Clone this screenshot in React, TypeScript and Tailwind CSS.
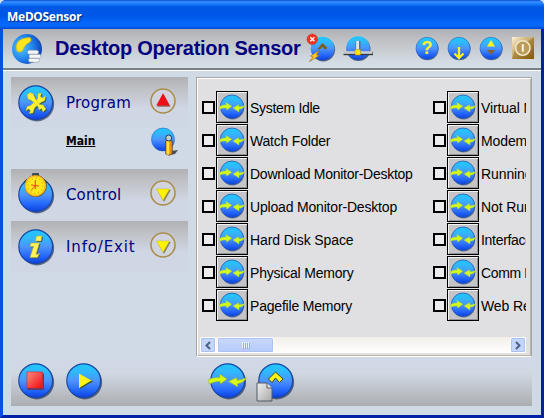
import React from "react";

function Defs() {
  return (
    <svg width="0" height="0" className="absolute" aria-hidden="true">
      <defs>
        <linearGradient id="ball" x1="0" y1="0" x2="0" y2="1">
          <stop offset="0" stopColor="#20c8ff" />
          <stop offset="0.25" stopColor="#30b8fc" />
          <stop offset="0.5" stopColor="#4c94fa" />
          <stop offset="0.8" stopColor="#2264fa" />
          <stop offset="1" stopColor="#0c40d8" />
        </linearGradient>
        <radialGradient id="globe" cx="0.3" cy="0.45" r="0.75">
          <stop offset="0" stopColor="#58c8ff" />
          <stop offset="0.5" stopColor="#2488ee" />
          <stop offset="1" stopColor="#0838b0" />
        </radialGradient>
        <linearGradient id="brown" x1="0" y1="0" x2="1" y2="1">
          <stop offset="0" stopColor="#fff4d8" />
          <stop offset="0.35" stopColor="#b89858" />
          <stop offset="1" stopColor="#805800" />
        </linearGradient>
        <linearGradient id="red" x1="0" y1="0" x2="1" y2="1">
          <stop offset="0" stopColor="#ff8c84" />
          <stop offset="1" stopColor="#ee0808" />
        </linearGradient>
        <linearGradient id="paper" x1="0" y1="0" x2="1" y2="1">
          <stop offset="0" stopColor="#f0f0f0" />
          <stop offset="1" stopColor="#a8a8a8" />
        </linearGradient>
      </defs>
    </svg>
  );
}

/* 38 x 38 glossy round button with a drop shadow */
function Ball({ children }: { children?: React.ReactNode }) {
  return (
    <svg width="38" height="38" viewBox="0 0 38 38" className="block shrink-0 overflow-visible">
      <circle cx="18.9" cy="19.2" r="17.2" fill="#283858" opacity="0.7" />
      <circle cx="17.7" cy="17.7" r="16.9" fill="url(#ball)" stroke="#1a45a5" strokeWidth="1.2" />
      {children}
    </svg>
  );
}

function Arrows() {
  return (
    <g fill="#d8f818" stroke="#88b020" strokeWidth="0.5">
      <path d="M-2 17 Q2 14 10 14.5 L9.5 11 L17 16 L10.5 21 L10 18.5 Q4 18 -0.5 21 Z" />
      <path d="M36.5 14.5 Q34 20 27.5 20.8 L28 24 L18.5 18.5 L26.5 14.5 L27 17.3 Q32 17 36.5 14.5 Z" />
    </g>
  );
}

function SmallArrows() {
  return (
    <svg width="26" height="26" viewBox="0 0 26 26" className="block overflow-visible">
      <circle cx="13.6" cy="13.8" r="11.6" fill="#657080" />
      <circle cx="13" cy="12.7" r="11.7" fill="url(#ball)" stroke="#2458b8" strokeWidth="0.8" />
      <g fill="#d4f81c" stroke="#a8dc30" strokeWidth="0.4">
        <path d="M0.5 12.5 Q3 10.5 7.3 11 L6.8 8.5 L12.8 12.2 L7.8 16 L7.2 14 Q3 13.6 1 15.2 Z" />
        <path d="M26 11.5 Q24 15 20 15.2 L20 18 L14 14 L19.5 10.7 L19.7 12.8 Q23 12.8 26 11.5 Z" />
      </g>
    </svg>
  );
}

function LogoIcon() {
  return (
    <svg width="34" height="34" viewBox="0 0 34 34" className="block">
      <circle cx="17" cy="19" r="15" fill="url(#globe)" />
      <path d="M7 21 Q5 16 8 11.5 Q12 7.5 20 7.5 Q22.5 10 19.5 12.5 Q15 14 13.5 19 Q11 24 7 21 Z" fill="#ffe51b" stroke="#c8b010" strokeWidth="0.6" />
      <g stroke="#8898a8" strokeWidth="0.6" fill="#f6f6f6">
        <rect x="18.5" y="28.2" width="11" height="4" rx="1.8" />
        <rect x="19" y="24.2" width="12" height="4" rx="1.8" />
        <rect x="17.5" y="20.2" width="11" height="4" rx="1.8" />
      </g>
    </svg>
  );
}

function HeaderErrorIcon() {
  return (
    <svg width="30" height="30" viewBox="0 0 30 30" className="block overflow-visible">
      <circle cx="16.3" cy="15.6" r="11.8" fill="#496080" />
      <circle cx="15.5" cy="14.5" r="11.8" fill="url(#ball)" />
      <path d="M10.5 15 L15.5 9 L20.5 14 L17.8 15.6 L15.3 12.8 L13 15.5 Z" fill="#785d13" />
      <path d="M2.5 27.5 L6 22.8 L3.5 22 L12 16.5 L9.5 21 L12.5 21.5 Z" fill="#ffca24" stroke="#986014" strokeWidth="0.6" />
      <circle cx="5.3" cy="5.3" r="5.3" fill="#ec3420" stroke="#ce3425" strokeWidth="0.6" />
      <path d="M3.3 3.3 L7.3 7.3 M7.3 3.3 L3.3 7.3" stroke="#fff" strokeWidth="1.5" />
    </svg>
  );
}

function HeaderNetworkIcon() {
  return (
    <svg width="30" height="30" viewBox="0 0 30 30" className="block overflow-visible">
      <circle cx="15.5" cy="16" r="12" fill="#496080" />
      <circle cx="15" cy="15" r="11.8" fill="url(#ball)" />
      <path d="M0.5 20.5 H30" stroke="#303840" strokeWidth="3.4" />
      <path d="M0 19.5 H29.5" stroke="#c8c8c8" strokeWidth="2.8" />
      <path d="M15 8 V18" stroke="#536570" strokeWidth="4.8" />
      <path d="M14.6 8 V18" stroke="#dde2e6" strokeWidth="3" />
      <rect x="12" y="16.5" width="5.5" height="5.5" rx="1" fill="#ffe21c" stroke="#ad9310" strokeWidth="0.6" />
    </svg>
  );
}

function SmallBall({ children }: { children: React.ReactNode }) {
  return (
    <svg width="24" height="24" viewBox="0 0 24 24" className="block overflow-visible">
      <circle cx="12.4" cy="13" r="11.2" fill="#50658b" />
      <circle cx="12" cy="12.3" r="11" fill="url(#ball)" stroke="#2b69c0" strokeWidth="0.6" />
      {children}
    </svg>
  );
}

function PowerIcon() {
  return (
    <svg width="24" height="24" viewBox="0 0 24 24" className="block">
      <path d="M1 1 H23 V23 H1 Z" fill="url(#brown)" />
      <path d="M1 23 V1 H23 L17 5 L6 7 Z" fill="#fff3d2" opacity="0.35" />
      <circle cx="11.8" cy="12" r="7.2" fill="#ba9b5c" stroke="#eee7c9" strokeWidth="1.6" />
      <path d="M11.8 8.3 V15.8" stroke="#fff8e4" strokeWidth="2" />
    </svg>
  );
}

function Ring({ up }: { up?: boolean }) {
  return (
    <svg width="26" height="26" viewBox="0 0 26 26" className="block">
      <circle cx="13" cy="13" r="12" fill="#d1d4de" stroke="#ab8d4b" strokeWidth="1.6" />
      {up ? (
        <>
          <path d="M13.5 6 L20.5 18.8 H7 Z" fill="#8c6860" />
          <path d="M13 5.3 L19.7 17.5 H6.3 Z" fill="#f00e18" />
        </>
      ) : (
        <>
          <path d="M7.3 9.9 H20.8 L14 22 Z" fill="#888462" />
          <path d="M6.5 9 H19.5 L13 20.3 Z" fill="#fff200" stroke="#c3ba20" strokeWidth="0.5" />
        </>
      )}
    </svg>
  );
}

function PersonIcon() {
  return (
    <svg width="28" height="28" viewBox="0 0 28 28" className="block overflow-visible">
      <circle cx="12" cy="12.5" r="11.5" fill="url(#ball)" stroke="#2766bd" strokeWidth="0.6" />
      <path d="M20 24 L27 23 L24 27 L19 28 Z" fill="#48505b" />
      <path d="M14.7 14 Q18 11.5 21.3 14 V27 Q18 29.5 14.7 27 Z" fill="#ef8e15" stroke="#3d3830" strokeWidth="0.7" />
      <path d="M16.9 14 V27.5" stroke="#ffe338" strokeWidth="2.6" />
      <circle cx="17.7" cy="11" r="3" fill="#b9cfdb" stroke="#263d55" strokeWidth="1" />
    </svg>
  );
}

/* crossed spanner and screwdriver */
function WrenchMark() {
  return (
    <g strokeLinejoin="round">
      <g fill="#2f5a50" transform="translate(1 1)">
        <path d="M9 10 L12 7.5 L15 8.5 L18 14.5 L21.5 19.5 L25 20 L28 24 L25 27 L23.5 23.5 L21 25 L20 21.5 L14 16 L10 14 Z" />
        <path d="M20 8.5 L23.5 8 L22.5 11.5 L24.5 13 L27.5 11 L27 15.5 L23 17.5 L16.5 23 L15 28 L11 28.5 L12.5 25.5 L10.5 24 L8 26 L9 21.5 L12.5 20.5 L19.5 14 Z" />
      </g>
      <g fill="#fff138" stroke="#a4a620" strokeWidth="0.4">
        <path d="M20 8.5 L23.5 8 L22.5 11.5 L24.5 13 L27.5 11 L27 15.5 L23 17.5 L16.5 23 L15 28 L11 28.5 L12.5 25.5 L10.5 24 L8 26 L9 21.5 L12.5 20.5 L19.5 14 Z" />
        <path d="M9 10 L12 7.5 L15 8.5 L18 14.5 L21.5 19.5 L25 20 L28 24 L25 27 L23.5 23.5 L21 25 L20 21.5 L14 16 L10 14 Z" />
      </g>
    </g>
  );
}

function ClockMark() {
  return (
    <g>
      <path d="M7 3.5 L10 6.5 M28 3.5 L25 6.5" stroke="#28435a" strokeWidth="4" />
      <rect x="14" y="-4" width="7" height="5" rx="1" fill="#3e4a58" />
      <circle cx="17.7" cy="9" r="11" fill="#675620" />
      <circle cx="17.4" cy="8.8" r="9.9" fill="#ffe918" stroke="#ffb825" strokeWidth="1.5" />
      <circle cx="17.4" cy="8.8" r="7.5" fill="none" stroke="#ac8c21" strokeWidth="1" strokeDasharray="1 2.93" />
      <path d="M17.3 3 V12 M13 8 L21 9 M17.3 9 L13 13.5" stroke="#e74712" strokeWidth="1" />
    </g>
  );
}

function InfoMark() {
  return (
    <g>
      <path d="M18.5 7 H24 L23 12 H17.5 Z M13 14 H21.5 L18 25.5 L21.5 24.5 L19.5 28.5 H12 L15.5 17.5 H12 Z" fill="#39506a" transform="translate(1 1)" />
      <path d="M18.5 7 H24 L23 12 H17.5 Z M13 14 H21.5 L18 25.5 L21.5 24.5 L19.5 28.5 H12 L15.5 17.5 H12 Z" fill="#fff25b" stroke="#b0b22a" strokeWidth="0.6" />
    </g>
  );
}

type SidebarItemProps = {
  label: string;
  icon: React.ReactNode;
  up?: boolean;
  className: string;
  labelClass: string;
};

function SidebarItem({ label, icon, up, className, labelClass }: SidebarItemProps) {
  return (
    <div className={`flex w-[177px] bg-[linear-gradient(to_bottom,#b0b1b4_0px,#bfc1c5_12px,#d0d7e4_32px)] pl-[7px] ${className}`}>
      <div className="mt-[8px] w-[38px]">{icon}</div>
      <span className={`mt-[17px] ml-[10px] w-[84px] whitespace-nowrap font-['DejaVu_Sans',sans-serif] text-[15px] leading-[19px] text-[#000080] ${labelClass}`}>{label}</span>
      <div className="mt-[11px]"><Ring up={up} /></div>
    </div>
  );
}

function SensorRow({ label, spacing }: { label: string; spacing: string }) {
  return (
    <div className="flex h-[33px] items-start">
      <span className="mt-[10px] mr-[1px] h-[13px] w-[13px] shrink-0 border-2 border-black bg-[#ececee]" />
      <span className="flex h-[32px] w-[32px] shrink-0 items-center justify-center border border-black bg-[#c5c5c7] shadow-[inset_1px_1px_0_#f2f2f2,inset_-1px_-1px_0_#929292]">
        <SmallArrows />
      </span>
      <span className={`mt-[8px] ml-[2px] whitespace-nowrap font-['Liberation_Sans',Arial,sans-serif] text-[14px] leading-[18px] text-black ${spacing}`}>{label}</span>
    </div>
  );
}

const left = [
  { label: "System Idle", spacing: "tracking-[-0.3px]" },
  { label: "Watch Folder", spacing: "tracking-[-0.2px]" },
  { label: "Download Monitor-Desktop", spacing: "tracking-[-0.26px]" },
  { label: "Upload Monitor-Desktop", spacing: "tracking-[-0.18px]" },
  { label: "Hard Disk Space", spacing: "tracking-[-0.1px]" },
  { label: "Physical Memory", spacing: "tracking-[-0.2px]" },
  { label: "Pagefile Memory", spacing: "tracking-[-0.2px]" },
];
const right = [
  { label: "Virtual Memory", spacing: "tracking-[-0.1px]" },
  { label: "Modem", spacing: "tracking-[-0.1px]" },
  { label: "Running", spacing: "tracking-[-0.1px]" },
  { label: "Not Running", spacing: "tracking-[-0.1px]" },
  { label: "Interface", spacing: "tracking-[-0.3px]" },
  { label: "Comm Port", spacing: "tracking-[-0.35px]" },
  { label: "Web Request", spacing: "tracking-[-0.1px]" },
];

function ScrollButton({ next }: { next?: boolean }) {
  return (
    <span className="flex h-[16px] w-[16px] shrink-0 items-center justify-center rounded-[2px] border border-white bg-[#c4d5fb] shadow-[inset_0_0_0_1px_#abc2f5]">
      <svg width="8" height="9" viewBox="0 0 8 9">
        <path d={next ? "M2 1 L5.5 4.5 L2 8" : "M6 1 L2.5 4.5 L6 8"} fill="none" stroke="#4b6185" strokeWidth="2" />
      </svg>
    </span>
  );
}

export default function App() {
  return (
    <div className="h-[418px] w-[544px] overflow-hidden bg-[#d5dfeb]">
      <Defs />
      <div className="flex h-[418px] flex-col overflow-hidden rounded-t-[6px] bg-[#0648de]">
        <div className="flex h-[29px] shrink-0 items-center bg-[linear-gradient(to_bottom,#0750d4_0px,#3a91ff_2px,#167bff_4px,#0057e3_7px,#0057e8_16px,#0668fb_23px,#0668fb_26px,#0049cf_29px)] pt-[4px] pl-[7px]">
          <span className="font-['Noto_Sans',sans-serif] text-[12px] leading-[16px] font-bold tracking-[-0.3px] text-white [text-shadow:1px_1px_1px_#00297e]">MeDOSensor</span>
        </div>

        <div className="flex h-[389px] flex-col border-r-[3px] border-b-[3px] border-l-[3px] border-r-[#0020a8] border-b-[#0020a8] border-l-[#0650e4] bg-[#d0d9e6]">
          <header className="flex h-[42px] shrink-0 items-start border-b border-white bg-[linear-gradient(to_bottom,#afb0b3_0px,#c0c2c5_12px,#d2dae2_32px,#d5dfe6_39px,#7b8184_39px,#7b8184_41px)] pt-[1px] pl-[7px]">
            <LogoIcon />
            <h1 className="mt-[6px] ml-[11px] w-[252px] whitespace-nowrap font-['Liberation_Sans',Arial,sans-serif] text-[20px] leading-[24px] font-bold tracking-[-0.28px] text-[#000080]">Desktop Operation Sensor</h1>
            <div className="mt-[4px]"><HeaderErrorIcon /></div>
            <div className="mt-[3px] ml-[6px]"><HeaderNetworkIcon /></div>
            <div className="mt-[6px] ml-[42px] flex gap-[8px]">
              <SmallBall>
                <text x="12" y="18" textAnchor="middle" className="font-['Liberation_Sans',Arial,sans-serif] text-[18px] font-bold" fill="#fff22c">?</text>
              </SmallBall>
              <SmallBall><path d="M12 11 V22 M7.5 17.5 L12 22 L16.5 17.5" fill="none" stroke="#fff31c" strokeWidth="2.3" /></SmallBall>
              <SmallBall><path d="M12 4 L16 10.5 H8 Z" fill="#fff31c" /><path d="M8 14 H16 L12 19 Z" fill="#806331" /></SmallBall>
              <PowerIcon />
            </div>
          </header>

          <div className="flex h-[286px] shrink-0 pt-[6px] pl-[8px]">
            <aside className="flex w-[177px] flex-col">
              <SidebarItem label="Program" icon={<Ball><WrenchMark /></Ball>} up className="h-[50px]" labelClass="tracking-[0.25px]" />
              <div className="flex h-[42px] pl-[55px]">
                <span className="mt-[6px] w-[85px] font-['DejaVu_Sans_Condensed','DejaVu_Sans',sans-serif] text-[12px] leading-[16px] font-bold text-black underline">Main</span>
                <PersonIcon />
              </div>
              <SidebarItem label="Control" icon={<Ball><ClockMark /></Ball>} className="h-[52px]" labelClass="tracking-[0.15px]" />
              <SidebarItem label="Info/Exit" icon={<Ball><InfoMark /></Ball>} className="h-[52px]" labelClass="tracking-[0.85px]" />
            </aside>

            <main className="ml-[8px] flex h-[280px] w-[336px] flex-col border border-t-[#aaa69f] border-r-[#aaa69f] border-b-white border-l-[#aaa69f] bg-[#e0e0e2] shadow-[inset_1px_1px_0_#fff,inset_-1px_-1px_0_#b7b1a8]">
              <div className="ml-[5px] flex h-[259px] w-[324px] overflow-hidden pt-[13px]">
                <div className="w-[231px] shrink-0">{left.map((r) => <SensorRow key={r.label} {...r} />)}</div>
                <div className="w-[93px] shrink-0 overflow-hidden">{right.map((r) => <SensorRow key={r.label} {...r} />)}</div>
              </div>
              <div className="ml-[3px] flex h-[16px] w-[326px] bg-[linear-gradient(to_bottom,#f1eee7,#fff)]">
                <ScrollButton />
                <span className="ml-[1px] flex h-[16px] w-[57px] items-center justify-center gap-[1px] rounded-[2px] border border-white bg-[linear-gradient(to_bottom,#cad9ff,#b4caf7)] shadow-[inset_0_0_0_1px_#abc2f5]">
                  {[0, 1, 2, 3].map((n) => <i key={n} className="h-[6px] w-px bg-[#eef4fe] shadow-[1px_1px_0_#8caee9]" />)}
                </span>
                <span className="flex-1" />
                <ScrollButton next />
              </div>
            </main>
          </div>

          <footer className="ml-[8px] flex h-[49px] w-[521px] shrink-0 items-start bg-[linear-gradient(to_bottom,#d0d9e6_0px,#d0d8e2_16px,#b0b3b7_45px,#a9acb0_49px)] pt-[6px] pl-[7px]">
            <Ball>
              <path d="M9.5 10.5 H26 V27 H9.5 Z" fill="#573d6b" />
              <path d="M9 9 H24.5 V25 H9 Z" fill="url(#red)" stroke="#d92535" strokeWidth="0.7" />
            </Ball>
            <div className="ml-[10px]">
              <Ball>
                <path d="M14 11.5 L27 18.5 L14 26 Z" fill="#3c583c" />
                <path d="M13 10.5 L25.5 17.5 L13 25 Z" fill="#fff21a" />
              </Ball>
            </div>
            <div className="ml-[106px]"><Ball><Arrows /></Ball></div>
            <div className="ml-[10px]">
              <Ball>
                <path d="M10.5 16 L17.5 9 L25 16 L21.5 19.5 L17.5 15 L14 19.5 Z" fill="#fff312" stroke="#3b4724" strokeWidth="1" />
                <path d="M-1 20 H9 L14 25 V38 H-1 Z" fill="url(#paper)" stroke="#555b62" strokeWidth="1" />
                <path d="M9 20 V25 H14" fill="#e8e8e8" stroke="#555b62" strokeWidth="1" />
              </Ball>
            </div>
          </footer>
        </div>
      </div>
    </div>
  );
}
